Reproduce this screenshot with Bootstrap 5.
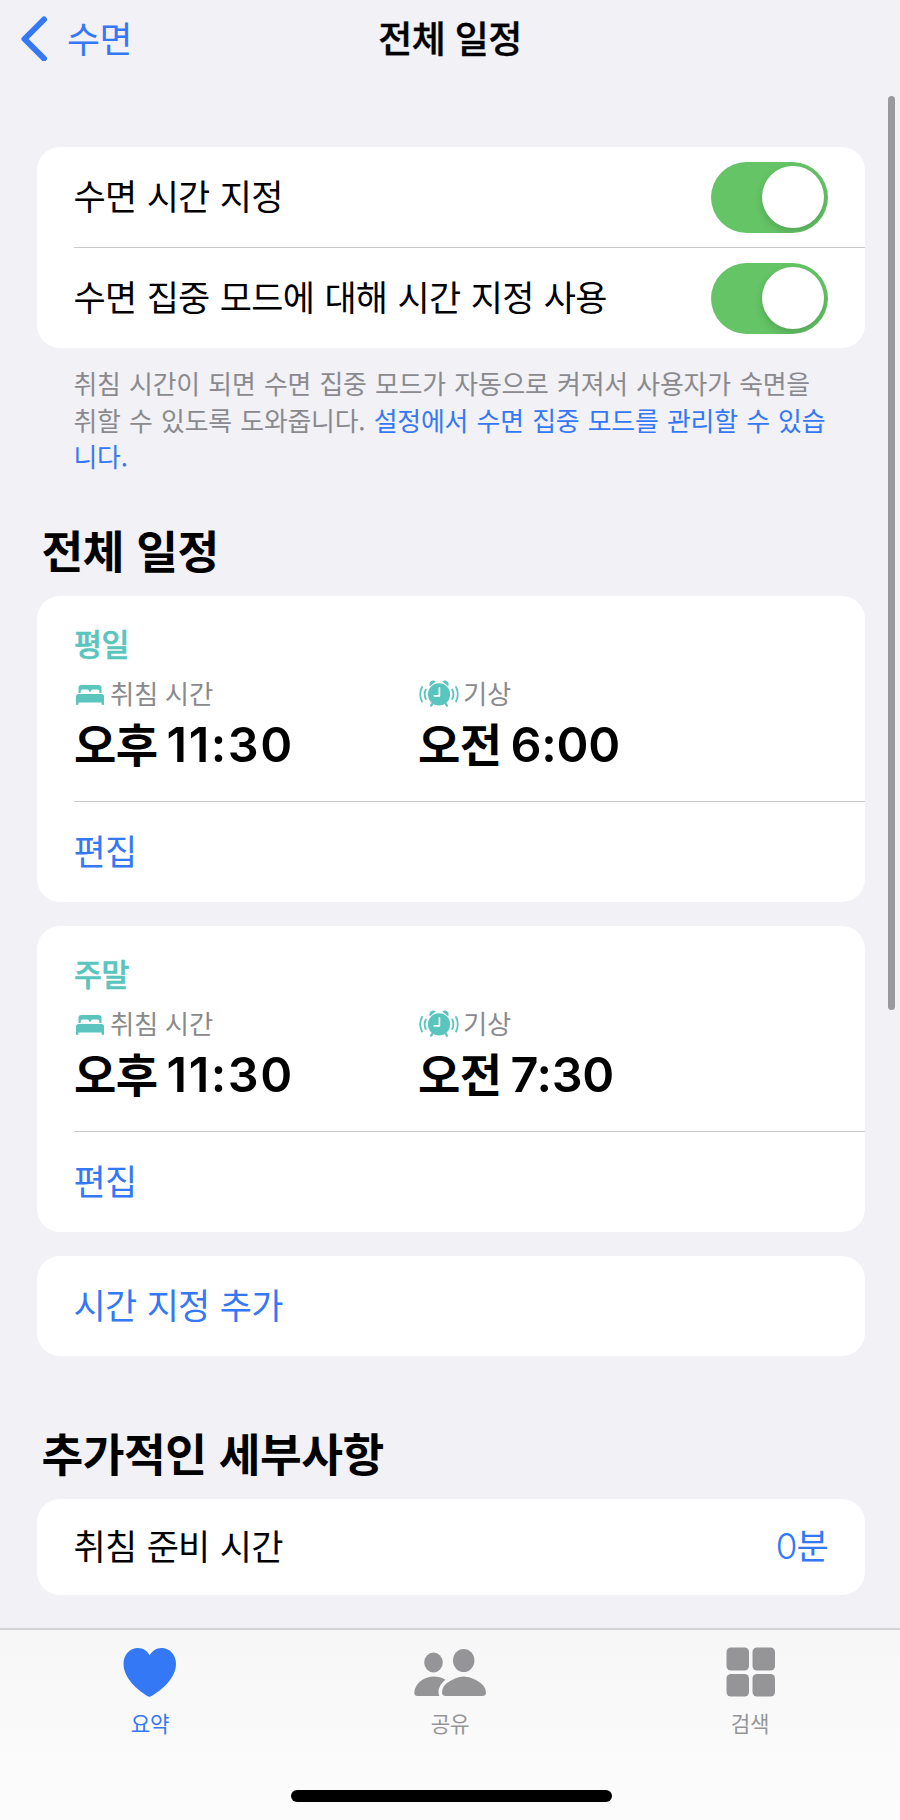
<!DOCTYPE html>
<html lang="ko">
<head>
<meta charset="utf-8">
<meta name="viewport" content="width=device-width, initial-scale=1">
<title>전체 일정</title>
<link href="https://cdn.jsdelivr.net/npm/bootstrap@5.3.0/dist/css/bootstrap.min.css" rel="stylesheet">
<style>
  :root { --ios-blue: #3478f6; --ios-gray: #8a8a8e; --ios-mint: #5ac4be; }
  body { font-family: "Noto Sans CJK KR", sans-serif; background: #f1f1f6; color: #000; font-size: 35px; letter-spacing: -.75px; line-height: 1; word-spacing: 1.2px; overflow: hidden; }
  a, .tint { color: var(--ios-blue); text-decoration: none; }
  .screen { width: 900px; height: 1820px; }
  .topbar { height: 147px; }
  .topbar .bar-row { display: grid; grid-template-columns: 1fr auto 1fr; height: 75px; padding: 0 21px; }
  .back { gap: 19px; font-size: 35.8px; letter-spacing: -.4px; }
  .bar-title { font-size: 37px; font-weight: 500; -webkit-text-stroke: .4px #000; word-spacing: 0; letter-spacing: -.6px; }
  .content { padding: 0 35px 0 37px; height: 1481px; }
  .panel { border: 0; border-radius: 23px; background: #fff; --bs-card-border-radius: 23px; }
  .cell { height: 100px; padding: 0 37px 0 36.5px; white-space: nowrap; }
  .cell .label { margin-top: -5px; }
  .rule { height: 1px; margin-left: 37px; background: #c9c9cc; }
  .toggle { width: 117px; height: 71px; padding: 4.5px 4px 4px 0; border-radius: 36px; background: #65c466; overflow: hidden; }
  .knob { width: 62px; height: 62px; border-radius: 50%; background: #fff; box-shadow: 0 4px 9px rgba(0,0,0,.16); }
  .note { color: var(--ios-gray); font-size: 25.9px; letter-spacing: -.2px; line-height: 36.7px; padding: 17px 30px 0 36.5px; margin: 0; height: 165px; word-spacing: 1.3px; white-space: nowrap; }
  .section-title { font-size: 45.4px; letter-spacing: -.5px; font-weight: 700; padding-left: 4.500px; margin: 0; line-height: 60px; word-spacing: 0; }
  .section-title.first { margin: 6px 0 17px; }
  .section-title.extra { margin: 66px 0 17px; }
  .schedule { height: 306px; }
  .summary { height: 205px; padding: 28px 37px 0 37px; }
  .day { color: var(--ios-mint); font-size: 30.4px; letter-spacing: -.4px; font-weight: 500; -webkit-text-stroke: .5px var(--ios-mint); line-height: 38px; }
  .slot { width: 344px; }
  .caption { height: 34px; color: var(--ios-gray); font-size: 26.4px; letter-spacing: -.2px; margin-top: 16px; word-spacing: -.5px; }
  .caption svg { color: var(--ios-mint); margin-right: 3px; margin-top: -3px; }
  .caption span { margin-top: -3px; }
  .time { font-family: Inter, "Noto Sans CJK KR", sans-serif; font-size: 48.5px; font-weight: 600; line-height: 58px; letter-spacing: -.3px; margin-top: 1px; word-spacing: -3px; white-space: nowrap; }
  .time b { font-family: "Noto Sans CJK KR", sans-serif; font-size: 46px; letter-spacing: -.5px; font-weight: 700; }
  .time i { font-style: normal; letter-spacing: 1.6px; }
  .tabs { height: 192px; border-top: 2px solid #d2d2d7; background: linear-gradient(#f7f7f8, #fcfcfd); }
  .tab { width: 300px; padding-top: 14px; color: #959597; font-size: 21.2px; letter-spacing: -.2px; }
  .tab svg { height: 56px; }
  .tab span { line-height: 30px; margin-top: 8px; }
  .tab.active { color: var(--ios-blue); }
  .home { width: 321px; height: 12px; border-radius: 6px; background: #000; left: 291px; top: 1790px; }
  .scroller { width: 7px; height: 914px; border-radius: 4px; background: #9a9a9e; left: 888px; top: 96px; }
</style>
</head>
<body>
<svg width="0" height="0" class="d-none" aria-hidden="true">
  <symbol id="bed" viewBox="0 0 30 24">
    <path fill="currentColor" d="M3.500 11V6Q3.500 3 6.500 3h17Q26.500 3 26.500 6V11h-2.200V9Q24.300 7.500 22.800 7.500H17.500Q16 7.500 16 9V9.500h-2V9Q14 7.500 12.500 7.500H7.200Q5.700 7.500 5.700 9V11ZM3.500 12h23q2.500 0 2.500 2.500V22q0 1-.9 1h-.6q-.9 0-.9-1v-1.500H3.400V22q0 1-.9 1h-.6q-.9 0-.9-1v-7.500Q1 12 3.500 12Z"/>
  </symbol>
  <symbol id="alarm" viewBox="0 0 40 30">
    <g fill="currentColor">
      <path d="M10.800 7.200Q9.600 4.300 11.700 2.400Q14.200.4 16.700 2.500Z"/>
      <path d="M29.200 7.200Q30.400 4.300 28.300 2.400Q25.800.4 23.300 2.500Z"/>
      <circle cx="20" cy="15.300" r="11.100"/>
    </g>
    <g fill="none" stroke="currentColor" stroke-linecap="round">
      <path stroke-width="2.200" d="M13.500 24.500l-1.400 2.200M26.500 24.500l1.400 2.200"/>
      <path stroke-width="1.800" d="M6.800 10.500Q4.400 15.200 6.800 20M3 8Q-.6 15.200 3 22.500M33.200 10.500Q35.600 15.200 33.200 20M37 8Q40.600 15.200 37 22.500"/>
      <path stroke="#fff" stroke-width="1.700" stroke-linejoin="round" d="M20.400 8.800v8h-5"/>
    </g>
  </symbol>
</svg>

<div class="screen position-relative d-flex flex-column overflow-hidden">
  <header class="topbar">
    <div class="bar-row align-items-center">
      <a href="#" class="back d-flex align-items-center">
        <svg width="27" height="46" viewBox="0 0 27 46" fill="none" stroke="currentColor" stroke-width="6" stroke-linecap="round" stroke-linejoin="round"><path d="M23 4.500L3.500 24L23 43.500"/></svg>
        <span>수면</span>
      </a>
      <div class="bar-title">전체 일정</div>
      <div></div>
    </div>
  </header>

  <main class="content">
    <section class="card panel">
      <div class="cell d-flex align-items-center justify-content-between">
        <span class="label">수면 시간 지정</span>
        <span class="toggle d-flex justify-content-end" role="switch" aria-checked="true"><span class="knob"></span></span>
      </div>
      <div class="rule"></div>
      <div class="cell d-flex align-items-center justify-content-between">
        <span class="label">수면 집중 모드에 대해 시간 지정 사용</span>
        <span class="toggle d-flex justify-content-end" role="switch" aria-checked="true"><span class="knob"></span></span>
      </div>
    </section>
    <p class="note">취침 시간이 되면 수면 집중 모드가 자동으로 켜져서 사용자가 숙면을<br>취할 수 있도록 도와줍니다. <a href="#">설정에서 수면 집중 모드를 관리할 수 있습<br>니다.</a></p>

    <h2 class="section-title first">전체 일정</h2>
    <section class="card panel schedule">
      <div class="summary">
        <div class="day">평일</div>
        <div class="d-flex">
          <div class="slot">
            <div class="caption d-flex align-items-center"><svg width="33" height="24" viewBox="-1 0 33 24"><use href="#bed" width="30" height="24"/></svg><span>취침 시간</span></div>
            <div class="time"><b>오후</b> <i>11:30</i></div>
          </div>
          <div class="slot">
            <div class="caption d-flex align-items-center"><svg width="42" height="30" viewBox="-1 0 42 30"><use href="#alarm" width="40" height="30"/></svg><span>기상</span></div>
            <div class="time"><b>오전</b> 6:00</div>
          </div>
        </div>
      </div>
      <div class="rule"></div>
      <a href="#" class="cell d-flex align-items-center"><span class="label">편집</span></a>
    </section>

    <section class="card panel schedule mt-4">
      <div class="summary">
        <div class="day">주말</div>
        <div class="d-flex">
          <div class="slot">
            <div class="caption d-flex align-items-center"><svg width="33" height="24" viewBox="-1 0 33 24"><use href="#bed" width="30" height="24"/></svg><span>취침 시간</span></div>
            <div class="time"><b>오후</b> <i>11:30</i></div>
          </div>
          <div class="slot">
            <div class="caption d-flex align-items-center"><svg width="42" height="30" viewBox="-1 0 42 30"><use href="#alarm" width="40" height="30"/></svg><span>기상</span></div>
            <div class="time"><b>오전</b> 7:30</div>
          </div>
        </div>
      </div>
      <div class="rule"></div>
      <a href="#" class="cell d-flex align-items-center"><span class="label">편집</span></a>
    </section>

    <section class="card panel mt-4">
      <a href="#" class="cell d-flex align-items-center"><span class="label">시간 지정 추가</span></a>
    </section>

    <h2 class="section-title extra">추가적인 세부사항</h2>
    <section class="card panel">
      <div class="cell d-flex align-items-center justify-content-between" style="height:96px">
        <span class="label">취침 준비 시간</span><span class="label tint"><span style="font-family:Inter;font-weight:300">0</span>분</span>
      </div>
    </section>
  </main>

  <nav class="tabs d-flex">
    <a href="#" class="tab active d-flex flex-column align-items-center">
      <svg width="56" height="56" viewBox="0 0 56 56"><path fill="currentColor" d="M27.500 53C24 51.500 1.500 38 1.500 20C1.500 10.500 8 4 16 4C21 4 25.300 6.800 27.700 11.300C30.200 6.800 34.500 4 39.500 4C47.500 4 54 10.500 54 20C54 38 31 51.500 27.500 53Z"/></svg>
      <span>요약</span>
    </a>
    <a href="#" class="tab d-flex flex-column align-items-center">
      <svg width="74" height="56" viewBox="0 0 74 56" fill="currentColor"><ellipse cx="20.500" cy="18.500" rx="9.300" ry="10"/><ellipse cx="50.700" cy="16.500" rx="10.700" ry="11.500"/><path d="M29 48.500Q29 41 38 36.500Q45 32.500 51 32.500Q57 32.500 63 36Q73 41.500 73 48.500Q73 52 69 52H33Q29 52 29 48.500Z"/><path d="M1.300 48.500Q2 40.500 9 36Q14.500 32.500 20.500 32.500Q27 32.500 32.500 35.800Q25.500 41 25.500 48Q25.500 50.500 26.300 52H4.500Q1.300 52 1.300 48.500Z"/></svg>
      <span>공유</span>
    </a>
    <a href="#" class="tab d-flex flex-column align-items-center">
      <svg width="50" height="56" viewBox="0 0 50 56" fill="currentColor"><rect x="1.500" y="3.500" width="22.500" height="23" rx="4.500"/><rect x="27.500" y="3.500" width="22.500" height="23" rx="4.500"/><rect x="1.500" y="30" width="22.500" height="22.500" rx="4.500"/><rect x="27.500" y="30" width="22.500" height="22.500" rx="4.500"/></svg>
      <span>검색</span>
    </a>
  </nav>
  <div class="home position-absolute"></div>
  <div class="scroller position-absolute"></div>
</div>
<script src="https://cdn.jsdelivr.net/npm/bootstrap@5.3.0/dist/js/bootstrap.bundle.min.js"></script>
</body>
</html>
